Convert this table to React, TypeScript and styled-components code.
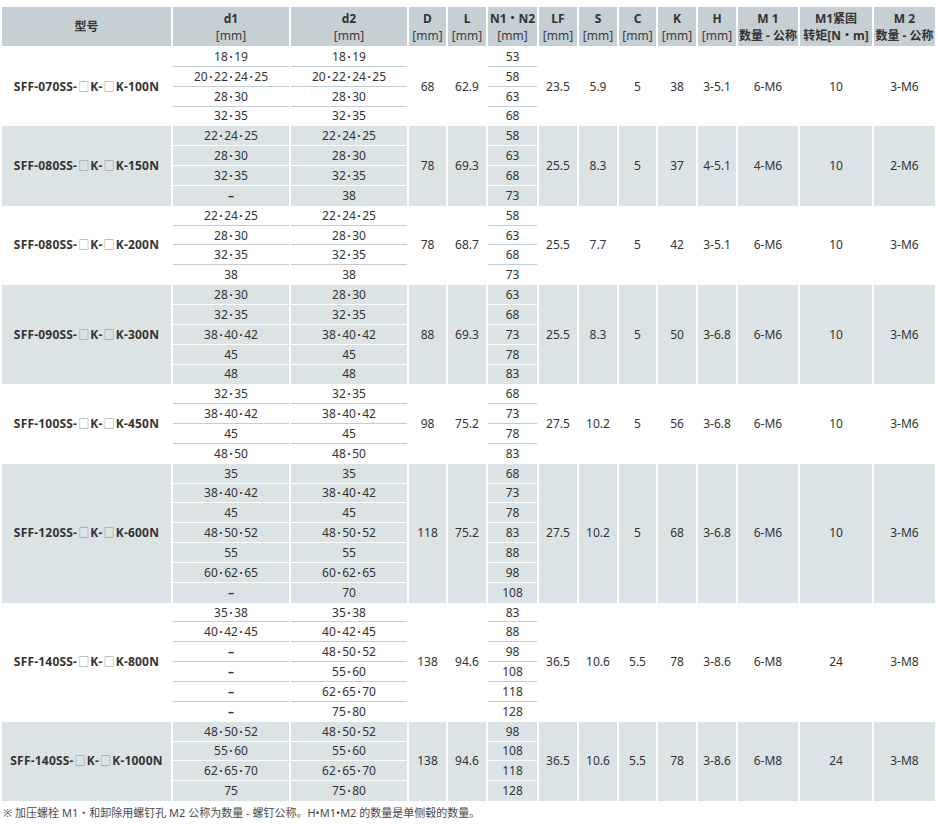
import React from 'react';
import styled, { createGlobalStyle } from 'styled-components';

const GlobalStyle = createGlobalStyle`
  html, body { margin: 0; padding: 0; background: #ffffff; }
  body {
    font-family: "Noto Sans", "Noto Sans CJK SC", sans-serif;
    color: #333333;
  }
`;

type Group = {
  model: string;
  shade: boolean;
  rows: [string, string, string][];
  D: string; L: string; LF: string; S: string; C: string; K: string; H: string;
  M1: string; T: string; M2: string;
};

const groups: Group[] = [
  {
    model: '070SS-|100N', shade: false,
    rows: [['18・19', '18・19', '53'], ['20・22・24・25', '20・22・24・25', '58'], ['28・30', '28・30', '63'], ['32・35', '32・35', '68']],
    D: '68', L: '62.9', LF: '23.5', S: '5.9', C: '5', K: '38', H: '3-5.1', M1: '6-M6', T: '10', M2: '3-M6',
  },
  {
    model: '080SS-|150N', shade: true,
    rows: [['22・24・25', '22・24・25', '58'], ['28・30', '28・30', '63'], ['32・35', '32・35', '68'], ['–', '38', '73']],
    D: '78', L: '69.3', LF: '25.5', S: '8.3', C: '5', K: '37', H: '4-5.1', M1: '4-M6', T: '10', M2: '2-M6',
  },
  {
    model: '080SS-|200N', shade: false,
    rows: [['22・24・25', '22・24・25', '58'], ['28・30', '28・30', '63'], ['32・35', '32・35', '68'], ['38', '38', '73']],
    D: '78', L: '68.7', LF: '25.5', S: '7.7', C: '5', K: '42', H: '3-5.1', M1: '6-M6', T: '10', M2: '3-M6',
  },
  {
    model: '090SS-|300N', shade: true,
    rows: [['28・30', '28・30', '63'], ['32・35', '32・35', '68'], ['38・40・42', '38・40・42', '73'], ['45', '45', '78'], ['48', '48', '83']],
    D: '88', L: '69.3', LF: '25.5', S: '8.3', C: '5', K: '50', H: '3-6.8', M1: '6-M6', T: '10', M2: '3-M6',
  },
  {
    model: '100SS-|450N', shade: false,
    rows: [['32・35', '32・35', '68'], ['38・40・42', '38・40・42', '73'], ['45', '45', '78'], ['48・50', '48・50', '83']],
    D: '98', L: '75.2', LF: '27.5', S: '10.2', C: '5', K: '56', H: '3-6.8', M1: '6-M6', T: '10', M2: '3-M6',
  },
  {
    model: '120SS-|600N', shade: true,
    rows: [['35', '35', '68'], ['38・40・42', '38・40・42', '73'], ['45', '45', '78'], ['48・50・52', '48・50・52', '83'], ['55', '55', '88'], ['60・62・65', '60・62・65', '98'], ['–', '70', '108']],
    D: '118', L: '75.2', LF: '27.5', S: '10.2', C: '5', K: '68', H: '3-6.8', M1: '6-M6', T: '10', M2: '3-M6',
  },
  {
    model: '140SS-|800N', shade: false,
    rows: [['35・38', '35・38', '83'], ['40・42・45', '40・42・45', '88'], ['–', '48・50・52', '98'], ['–', '55・60', '108'], ['–', '62・65・70', '118'], ['–', '75・80', '128']],
    D: '138', L: '94.6', LF: '36.5', S: '10.6', C: '5.5', K: '78', H: '3-8.6', M1: '6-M8', T: '24', M2: '3-M8',
  },
  {
    model: '140SS-|1000N', shade: true,
    rows: [['48・50・52', '48・50・52', '98'], ['55・60', '55・60', '108'], ['62・65・70', '62・65・70', '118'], ['75', '75・80', '128']],
    D: '138', L: '94.6', LF: '36.5', S: '10.6', C: '5.5', K: '78', H: '3-8.6', M1: '6-M8', T: '24', M2: '3-M8',
  },
];

const colWidths = [169, 116, 116, 37, 38, 49, 38, 38, 37, 38, 38, 60, 72, 61];

const Page = styled.div`
  width: 937px;
  padding-top: 7px;
`;

const Table = styled.table`
  width: 937px;
  table-layout: fixed;
  border-collapse: separate;
  border-spacing: 2px 0;
  font-size: 12px;
`;

const HeadCell = styled.th`
  box-sizing: border-box;
  height: 40px;
  padding: 0;
  background: #c6cfd3;
  border-bottom: 1px solid #ffffff;
  font-weight: 700;
  font-size: 12px;
  line-height: 17px;
  text-align: center;
  vertical-align: middle;
  color: #333333;
  white-space: nowrap;
`;

const HeadLine = styled.span<{ $unit?: boolean }>`
  display: block;
  height: 17px;
  font-weight: ${(p) => (p.$unit ? 400 : 700)};
  color: ${(p) => (p.$unit ? '#3c3c3c' : '#333333')};
`;

const Cell = styled.td<{ $shade: boolean; $rule?: boolean }>`
  box-sizing: border-box;
  height: 19.85px;
  padding: 0;
  background: ${(p) => (p.$shade ? '#dce3e5' : '#ffffff')};
  border-bottom: 1px solid
    ${(p) => (p.$rule ? (p.$shade ? '#ffffff' : '#c3ccd0') : 'transparent')};
  text-align: center;
  vertical-align: middle;
  font-size: 12px;
  line-height: 17px;
  white-space: nowrap;
  color: #333333;
`;

const ModelCell = styled(Cell)`
  font-weight: 700;
  letter-spacing: 0.2px;
`;

const Box = styled.span`
  font-family: "Noto Sans CJK SC", sans-serif;
  font-weight: 400;
  color: #8a8f92;
  font-size: 11px;
  margin: 0 1px;
`;

const Dot = styled.span`
  margin: 0 1.5px;
  font-weight: 700;
`;

const Dash = styled.span`
  font-weight: 700;
`;

const Note = styled.p`
  margin: 5px 0 0 3px;
  font-size: 11px;
  line-height: 14px;
  color: #4a4a4a;
  font-family: "Noto Sans", "Noto Sans CJK SC", sans-serif;
`;

function Val({ text }: { text: string }) {
  if (text === '–') return <Dash>–</Dash>;
  const parts = text.split('・');
  return (
    <>
      {parts.map((p, i) => (
        <React.Fragment key={i}>
          {i > 0 && <Dot>·</Dot>}
          {p}
        </React.Fragment>
      ))}
    </>
  );
}

function Model({ code }: { code: string }) {
  const [size, load] = code.split('|');
  return (
    <>
      SFF-{size}
      <Box>□</Box>K-<Box>□</Box>K-{load}
    </>
  );
}

function GroupRows({ g }: { g: Group }) {
  const n = g.rows.length;
  const single = [g.D, g.L];
  const rest = [g.LF, g.S, g.C, g.K, g.H, g.M1, g.T, g.M2];
  return (
    <>
      {g.rows.map((r, i) => {
        const rule = i < n - 1;
        return (
          <tr key={i}>
            {i === 0 && (
              <ModelCell $shade={g.shade} rowSpan={n}>
                <Model code={g.model} />
              </ModelCell>
            )}
            <Cell $shade={g.shade} $rule={rule}><Val text={r[0]} /></Cell>
            <Cell $shade={g.shade} $rule={rule}><Val text={r[1]} /></Cell>
            {i === 0 &&
              single.map((v, k) => (
                <Cell key={'s' + k} $shade={g.shade} rowSpan={n}>{v}</Cell>
              ))}
            <Cell $shade={g.shade} $rule={rule}>{r[2]}</Cell>
            {i === 0 &&
              rest.map((v, k) => (
                <Cell key={'r' + k} $shade={g.shade} rowSpan={n}>{v}</Cell>
              ))}
          </tr>
        );
      })}
    </>
  );
}

const mmCols = ['D', 'L'];
const mmCols2 = ['LF', 'S', 'C', 'K', 'H'];

export default function App() {
  return (
    <Page>
      <GlobalStyle />
      <Table>
        <colgroup>
          {colWidths.map((w, i) => (
            <col key={i} style={{ width: w }} />
          ))}
        </colgroup>
        <thead>
          <tr>
            <HeadCell>型号</HeadCell>
            <HeadCell><HeadLine>d1</HeadLine><HeadLine $unit>[mm]</HeadLine></HeadCell>
            <HeadCell><HeadLine>d2</HeadLine><HeadLine $unit>[mm]</HeadLine></HeadCell>
            {mmCols.map((c) => (
              <HeadCell key={c}><HeadLine>{c}</HeadLine><HeadLine $unit>[mm]</HeadLine></HeadCell>
            ))}
            <HeadCell><HeadLine>N1・N2</HeadLine><HeadLine $unit>[mm]</HeadLine></HeadCell>
            {mmCols2.map((c) => (
              <HeadCell key={c}><HeadLine>{c}</HeadLine><HeadLine $unit>[mm]</HeadLine></HeadCell>
            ))}
            <HeadCell><HeadLine>M 1</HeadLine><HeadLine>数量 - 公称</HeadLine></HeadCell>
            <HeadCell><HeadLine>M1紧固</HeadLine><HeadLine>转矩[N・m]</HeadLine></HeadCell>
            <HeadCell><HeadLine>M 2</HeadLine><HeadLine>数量 - 公称</HeadLine></HeadCell>
          </tr>
        </thead>
        <tbody>
          {groups.map((g, i) => (
            <GroupRows key={i} g={g} />
          ))}
        </tbody>
      </Table>
      <Note>※ 加压螺栓 M1・和卸除用螺钉孔 M2 公称为数量 - 螺钉公称。H•M1•M2 的数量是单侧毂的数量。</Note>
    </Page>
  );
}
